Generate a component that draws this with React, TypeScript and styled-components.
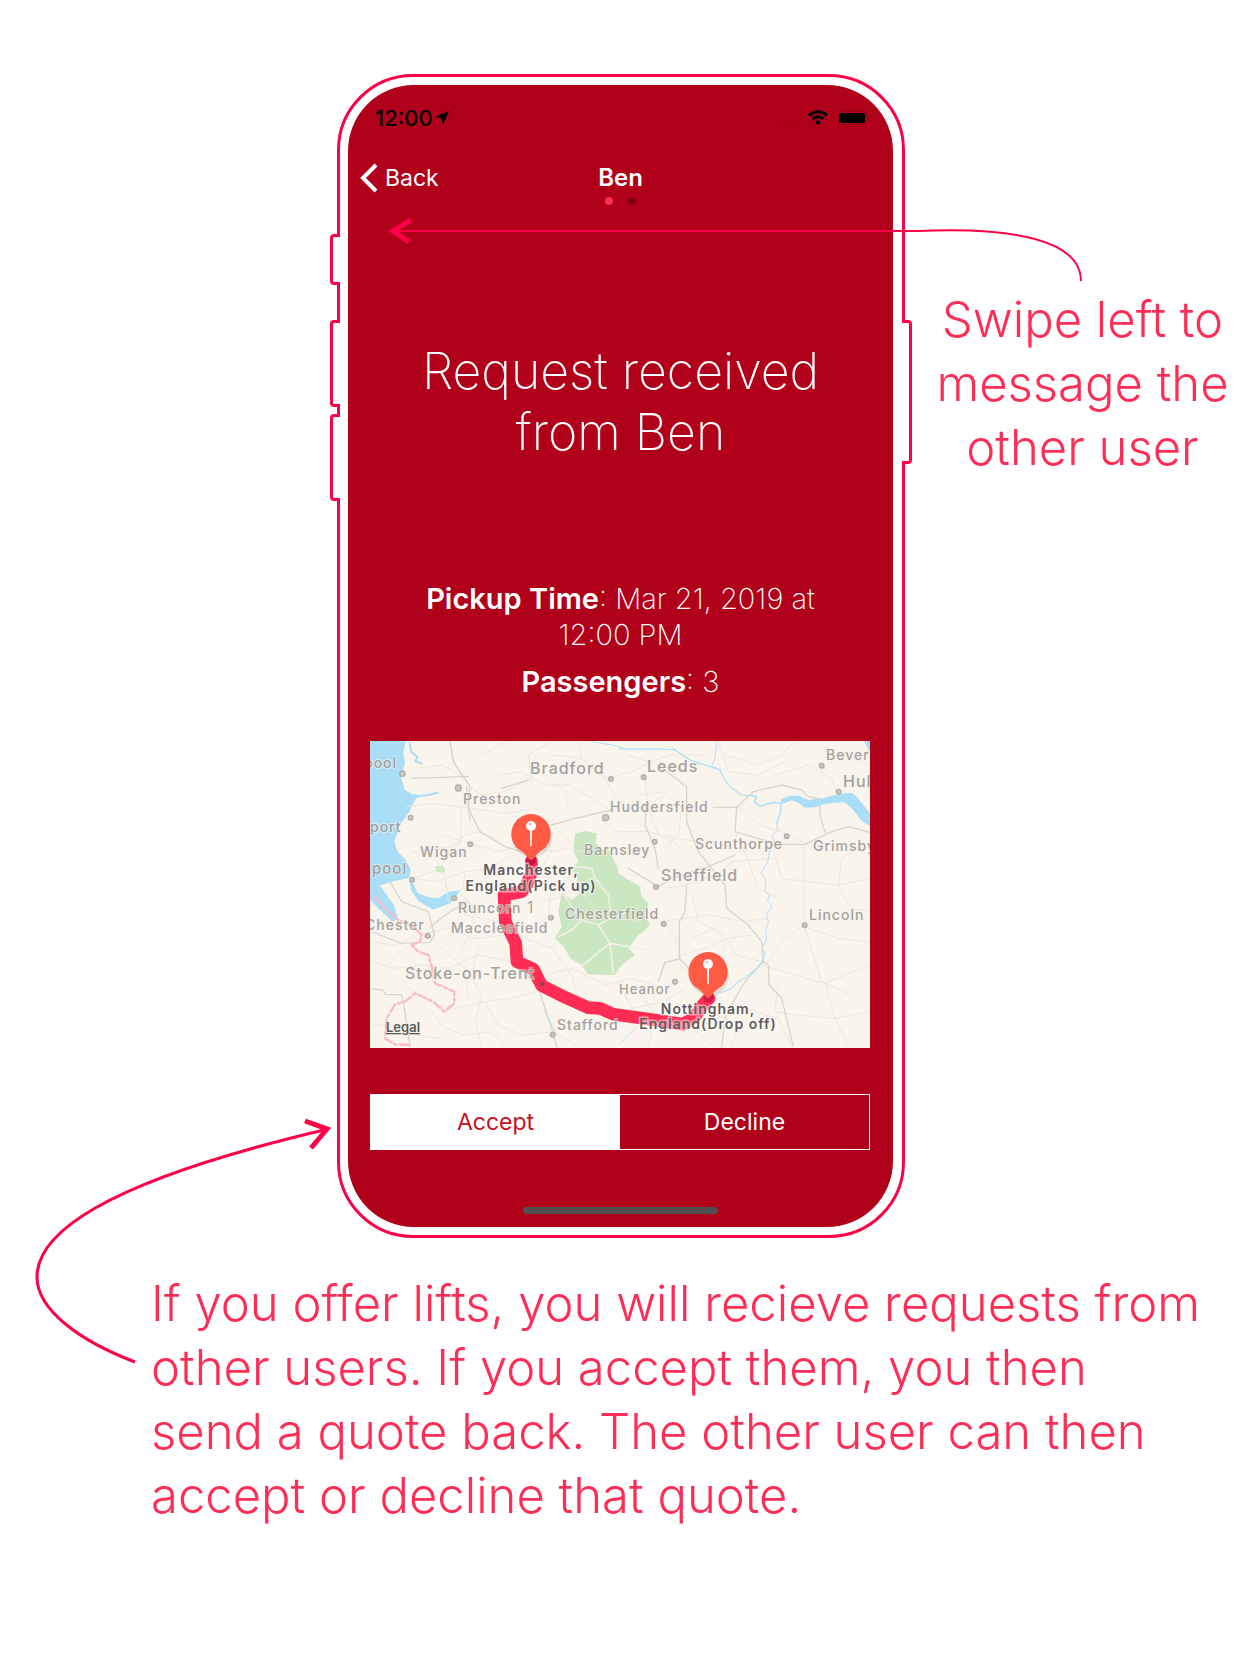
import React, { useState } from "react";
import styled, { createGlobalStyle } from "styled-components";

const pink = "#ff2d55";
const outline = "#ff0048";
const red = "#b10019";

const GlobalStyle = createGlobalStyle`
  *, *::before, *::after { box-sizing: border-box; }
  body {
    margin: 0;
    background: #fff;
    font-family: Inter, "Liberation Sans", Arial, sans-serif;
  }
`;

const Page = styled.main`
  display: flex;
  flex-direction: column;
  padding: 74px 0 120px;
`;

const Showcase = styled.section`
  display: grid;
  grid-template-columns: minmax(0, 1fr) minmax(0, 568px) minmax(0, 1fr);
`;

const Note = styled.p<{ $center?: boolean }>`
  margin: 0;
  color: ${pink};
  font-size: 49px;
  font-weight: 300;
  line-height: 64px;
  text-align: ${(p) => (p.$center ? "center" : "left")};
  white-space: nowrap;
`;

const SideNote = styled.aside`
  grid-column: 3;
  display: flex;
  justify-content: center;
  padding: 214px 0 0 18px;
`;

const Footnote = styled.footer`
  padding: 34px 60px 0 151px;
`;

const Phone = styled.div`
  grid-column: 2;
  position: relative;
  border: 3px solid ${outline};
  border-radius: 76px;
  padding: 8px 9px 8px 8px;
`;

const SideButton = styled.span<{ $side: "left" | "right"; $top: number; $height: number }>`
  position: absolute;
  top: ${(p) => p.$top}px;
  height: ${(p) => p.$height}px;
  width: 10px;
  background: #fff;
  border: 3px solid ${outline};
  ${(p) =>
    p.$side === "left"
      ? "left: -10px; border-right: 0; border-radius: 4px 0 0 4px;"
      : "right: -10px; border-left: 0; border-radius: 0 4px 4px 0;"}
`;

const SwipeArrow = styled.svg`
  position: absolute;
  left: 40px;
  top: 140px;
  z-index: 1;
  pointer-events: none;
`;

const RequestArrow = styled.svg`
  position: absolute;
  right: 568px;
  top: 1033px;
  pointer-events: none;
`;

const Screen = styled.div`
  display: flex;
  flex-direction: column;
  overflow: hidden;
  border-radius: 66px;
  background: ${red};
  color: #fff;
`;

const StatusBar = styled.div`
  display: flex;
  justify-content: space-between;
  align-items: center;
  height: 65px;
  padding: 0 23px 0 27px;
  color: #000;
`;

const StatusGroup = styled.div<{ $gap: number }>`
  display: flex;
  align-items: center;
  gap: ${(p) => p.$gap}px;
  font-size: 22px;
  font-weight: 500;
`;

const NavBar = styled.header`
  display: grid;
  grid-template-columns: 1fr auto 1fr;
  align-items: center;
  height: 56px;
  padding: 0 12px;
`;

const BackButton = styled.button`
  display: flex;
  align-items: center;
  justify-self: start;
  gap: 7px;
  border: 0;
  padding: 0;
  background: none;
  color: #fff;
  font: 400 23px/28px Inter, sans-serif;
`;

const NavTitle = styled.h1`
  margin: 0;
  font-size: 24px;
  font-weight: 600;
  line-height: 28px;
`;

const PageDots = styled.div`
  display: flex;
  justify-content: center;
  gap: 15px;
  height: 8px;
  margin-top: -9px;
`;

const Dot = styled.i<{ $active?: boolean }>`
  width: 8px;
  height: 8px;
  border-radius: 50%;
  background: ${(p) => (p.$active ? pink : "#850013")};
`;

const Title = styled.h2`
  margin: 0;
  padding-top: 136px;
  font-size: 50px;
  font-weight: 200;
  line-height: 61px;
  text-align: center;
`;

const Details = styled.div`
  display: flex;
  flex-direction: column;
  gap: 11px;
  padding-top: 118px;
  font-size: 29px;
  font-weight: 200;
  line-height: 36px;
  text-align: center;
`;

const Detail = styled.p`
  margin: 0;

  strong {
    font-weight: 600;
  }
`;

const MapCard = styled.div`
  margin: 41px 23px 0 22px;
  overflow: hidden;
  background: #f9f5ed;

  svg {
    display: block;
    width: 100%;
  }
`;

const Segments = styled.div`
  display: flex;
  margin: 46px 23px 0 22px;
  border: 1px solid #fff;
`;

const Segment = styled.button<{ $selected: boolean }>`
  flex: 1;
  height: 54px;
  border: 0;
  background: ${(p) => (p.$selected ? "#fff" : red)};
  color: ${(p) => (p.$selected ? "#c4101f" : "#fff")};
  font: 400 23px/28px Inter, sans-serif;
`;

const HomeIndicator = styled.div`
  align-self: center;
  width: 195px;
  height: 7px;
  margin: 57px 0 13px;
  border-radius: 4px;
  background: #505050;
`;

const minorRoads = [
  "M150 100L230 90 300 130",
  "M255 20L270 90 310 150 350 180 420 170 490 135",
  "M125 215L200 205 290 215 420 235 520 220",
  "M290 215L285 330 200 345 140 350",
  "M350 290L300 300 255 345 225 400 150 430",
  "M330 170L420 210 470 260 460 330",
  "M230 300L330 330 400 350 480 330 560 350 610 340",
  "M140 430L220 440 300 410 380 400 450 350",
  "M200 350L240 420 250 500 300 540 400 560",
  "M300 420L290 480 330 520 320 590 290 640",
  "M20 620L90 630 160 600 250 580 330 610 430 600",
  "M20 680L90 700 170 690 250 700 340 660 430 680",
  "M60 700L120 640 190 600 240 650 300 700 310 780",
  "M340 640L320 720 350 790 330 860 350 935",
  "M130 760L210 810 270 820 360 800 440 790 510 770",
  "M360 800L400 870 470 900 560 890 640 935",
  "M200 830L240 880 300 900 380 890 420 935",
  "M20 870L110 870 150 900 230 910",
  "M400 120L470 110 540 150 610 150 680 190 740 230",
  "M350 60L420 20",
  "M500 150L490 60 560 20",
  "M570 140L600 170 610 210 560 260 480 270",
  "M640 20L650 70 720 130 800 110 860 80",
  "M560 60L650 70M720 130L760 200 830 220 900 180",
  "M790 60L850 80 920 60 1010 60",
  "M840 130L850 220 880 300 940 330",
  "M830 180L900 170 950 220 940 300 900 340",
  "M700 250L760 290 850 290 930 310 1010 320",
  "M560 260L600 310 640 350 700 340",
  "M560 400L620 440 670 500 700 540 760 550 830 560",
  "M540 500L600 480 660 440",
  "M450 300L540 290 560 350 530 400",
  "M520 410L560 440 550 540 490 600",
  "M480 610L560 640 620 720 640 800 700 830",
  "M540 720L620 700 720 750 800 730 870 750",
  "M760 740L800 820 900 800 960 760",
  "M900 460L960 450 1060 420 1100 380 1230 370",
  "M880 560L960 550 1040 540 1130 560 1210 550",
  "M900 560L940 620 950 700 1000 740 1080 720",
  "M980 480L1000 560 1080 600 1110 660 1190 680",
  "M950 660L1020 640 1090 610 1160 600",
  "M1080 60L1180 90 1250 60 1290 20",
  "M1060 20L1090 110 1180 120 1260 80",
  "M1230 120L1330 90 1400 130 1420 190",
  "M1370 110L1430 50 1515 90",
  "M1420 60L1380 30",
  "M1110 290L1150 380 1180 460 1240 490",
  "M1120 215L1180 270 1250 290 1330 330",
  "M1220 330L1250 430 1330 440 1420 450 1515 430",
  "M1318 330L1318 560",
  "M1500 320L1430 370 1420 460 1460 520 1515 530",
  "M1318 570L1250 620 1200 690",
  "M1318 575L1370 740 1460 780",
  "M1318 575L1420 610 1515 620",
  "M1190 690L1290 720 1380 745 1515 690",
  "M1240 750L1230 830 1300 840 1410 850 1515 830",
  "M1380 745L1410 850 1450 935",
  "M1100 800L1170 830 1240 850 1280 935",
  "M900 840L980 880 1040 930",
  "M960 690L1010 750 1040 830 1120 870 1100 935",
  "M830 780L870 840 850 935",
  "M980 610L1050 580 1080 620 1060 700",
];

const majorRoads = [
  "M255 20L265 80 315 155 310 220 345 290 420 335 470 350",
  "M140 130L310 124",
  "M410 160L490 135",
  "M740 225L630 250 560 270",
  "M75 440L110 500 190 530 208 600 195 622 110 625 20 590",
  "M195 575L255 530 310 500",
  "M305 155L315 260",
  "M20 762L55 765 60 778 110 780 118 820 135 935",
  "M440 600L470 700 520 760 560 880 575 935",
  "M845 200L840 270 870 340 880 400",
  "M880 90L965 155 965 260 1000 350 1080 450 1085 520 1150 570 1190 620 1195 680",
  "M790 400L880 455 920 430 1030 395 1110 360",
  "M1045 217L1115 217",
  "M1115 217L1165 170 1250 150 1310 165 1330 185 1365 192",
  "M1365 192L1365 240 1380 292",
  "M1115 217L1110 290 1240 328 1320 328 1400 290 1450 275 1515 292",
  "M965 450L960 530 943 560 943 670 990 720",
  "M943 672L900 682 880 740",
  "M1195 680L1140 740 1110 790 1080 850 1070 935",
  "M1195 680L1210 690 1212 750 1250 790 1285 935",
];

const towns: [number, number, number][] = [
  [112, 116, 8], [280, 159, 9], [137, 248, 7], [316, 328, 7], [141, 434, 7],
  [268, 490, 7], [188, 602, 7], [738, 132, 7], [722, 248, 9], [558, 548, 7],
  [563, 899, 7], [836, 127, 7], [869, 320, 7], [873, 456, 7], [896, 567, 7],
  [930, 740, 7], [1265, 304, 7], [1319, 571, 7], [1370, 92, 7], [1421, 170, 7],
];

type LabelData = { x: number; y: number; size: number; text: string };

const placeLabels: LabelData[] = [
  { x: -6, y: 27, size: 14, text: "pool" },
  { x: 0, y: 91, size: 14, text: "port" },
  { x: 2, y: 133, size: 15, text: "pool" },
  { x: -5, y: 189, size: 14, text: "Chester" },
  { x: 160, y: 33, size: 16, text: "Bradford" },
  { x: 277, y: 31, size: 16, text: "Leeds" },
  { x: 93, y: 63, size: 14, text: "Preston" },
  { x: 240, y: 71, size: 14, text: "Huddersfield" },
  { x: 50, y: 116, size: 14, text: "Wigan" },
  { x: 214, y: 114, size: 14, text: "Barnsley" },
  { x: 325, y: 108, size: 14, text: "Scunthorpe" },
  { x: 443, y: 110, size: 14, text: "Grimsby" },
  { x: 456, y: 19, size: 14, text: "Beverley" },
  { x: 473, y: 46, size: 16, text: "Hull" },
  { x: 291, y: 140, size: 16, text: "Sheffield" },
  { x: 88, y: 172, size: 14, text: "Runcorn" },
  { x: 81, y: 192, size: 14, text: "Macclesfield" },
  { x: 195, y: 178, size: 14, text: "Chesterfield" },
  { x: 439, y: 179, size: 14, text: "Lincoln" },
  { x: 35, y: 238, size: 16, text: "Stoke-on-Trent" },
  { x: 249, y: 253, size: 13, text: "Heanor" },
  { x: 187, y: 289, size: 14, text: "Stafford" },
];

const PlaceLabel = styled.text<{ $size: number }>`
  font-size: ${(p) => p.$size}px;
  font-weight: 500;
  letter-spacing: 1px;
  fill: #a3a19e;
  stroke: #f9f5ed;
  stroke-opacity: 0.55;
  stroke-width: 2px;
  paint-order: stroke;
`;

const PinLabel = styled.text`
  font-size: 14px;
  font-weight: 600;
  letter-spacing: 1px;
  text-anchor: middle;
  fill: #5f5c5b;
  stroke: #fff;
  stroke-opacity: 0.5;
  stroke-width: 3px;
  paint-order: stroke;
`;

const LegalLink = styled.text`
  font-size: 13px;
  font-weight: 600;
  fill: #5a5a5a;
  text-decoration: underline;
`;

const RouteMark = styled.text`
  font-size: 16px;
  font-weight: 300;
  fill: #8d8b88;
`;

function Pin({ x, y }: { x: number; y: number }) {
  return (
    <g transform={`translate(${x} ${y})`}>
      <ellipse cx="1" cy="3" rx="20" ry="20" fill="#000" opacity="0.1" />
      <path d="M0-20A20 20 0 0 1 14 14Q6 19 3 24Q0 28-3 24Q-6 19-14 14A20 20 0 0 1 0-20Z" fill="#ff5a43" />
      <path d="M-1-4h2l-.3 16h-1.4z" fill="#fff" />
      <circle cy="-8" r="5" fill="#fff" />
      <circle cx="-1" cy="-10" r="1" fill="#ff8a78" />
    </g>
  );
}

function RouteMap() {
  return (
    <svg viewBox="0 0 500 307" role="img" aria-label="Route from Manchester to Nottingham">
      <g transform="scale(.33333) translate(-15 -18)" fill="none" strokeLinejoin="round" strokeLinecap="round">
        <path fill="#a9def6" d="M15 18H122L115 55 120 85 108 130 120 165 142 178 165 180 150 195 130 235 105 270 88 320 98 350 122 375 138 405 132 428 80 440 44 452 62 475 88 512 98 548 85 560 50 530 15 495Z" />
        <path fill="#a9def6" d="M134 440L143 442 158 475 190 487 220 490 250 470 287 466 272 485 255 505 205 524 160 498 138 465Z" />
        <path stroke="#a9def6" strokeWidth="6" d="M134 24L138 50 157 65 151 78 170 86M150 185L190 180 218 173" />
        <path fill="#cbe7c2" d="M630 295L665 288 695 295 692 325 715 345 735 348 750 385 770 405 800 440 825 455 830 485 850 505 838 540 855 570 835 590 820 600 790 640 810 660 770 690 750 720 670 718 650 690 615 670 600 640 570 610 590 575 580 530 590 475 620 495 640 480 635 430 620 400 640 380 625 345Z" />
        <path fill="#f9f5ed" d="M755 385L785 375 820 400 825 425 790 435 760 415Z" />
        <path fill="#cbe7c2" d="M210 395L232 390 242 405 236 414 213 410Z" />
        <g stroke="#ebe6de" strokeWidth="3">
          {minorRoads.map((d) => <path key={d} d={d} />)}
        </g>
        <g stroke="#d9d5cd" strokeWidth="4">
          {majorRoads.map((d) => <path key={d} d={d} />)}
        </g>
        <path stroke="#f3efe4" strokeWidth="5" d="M600 485L650 555 620 585 580 605M650 555L700 570 735 625 850 645M735 625L745 715M735 625L690 660 655 690M700 570L740 550 790 530M740 550L730 480 690 430 680 400 630 395" />
        <g stroke="#b5e1f2">
          <path strokeWidth="4" strokeDasharray="8 4" d="M765 42H890L930 45 975 75 1020 90 1065 105 1080 135 1100 160 1130 180 1160 182" />
          <path strokeWidth="3" d="M920 35L960 68 1000 85 1045 98M1055 20L1050 70 1040 95 1070 105M680 20L740 30 775 38" />
          <path strokeWidth="5" d="M1160 182L1175 185 1168 200 1185 214 1225 202 1248 205 1246 235 1235 265" />
          <path strokeWidth="3" d="M1235 265L1238 285 1222 300 1228 325 1214 345 1208 380 1188 415 1203 435 1200 465 1212 480 1208 500 1222 515 1204 535 1210 560 1202 590 1206 610 1192 640 1200 655 1192 680" />
          <path strokeWidth="4" strokeDasharray="10 4" d="M1192 680L1170 705 1145 725 1120 740 1100 760 1060 775 1040 790" />
          <path strokeWidth="3" d="M765 925L800 890 815 875M540 830L575 900" />
        </g>
        <path fill="#a9def6" d="M1246 194L1275 182 1302 182 1330 195 1375 190 1400 182 1430 176 1460 173 1475 185 1515 235V273L1490 258 1465 225 1440 202 1410 203 1380 207 1350 217 1320 218 1298 202 1280 196 1250 207Z" />
        <path fill="#a9def6" d="M1498 18H1515V55Z" />
        <path stroke="#ffb9c1" strokeWidth="7" strokeDasharray="26 9 9 9" d="M30 488L65 525 95 552 145 575 170 600 165 620 140 630 160 650 190 660 200 695 210 745 268 770 268 805 238 830 205 800 150 775 120 800 90 808 65 850 60 910 90 928 140 930" />
        <path stroke={pink} strokeWidth="38" d="M499 378L500 410 485 450 470 470 417 480 421 560 452 625 456 680 505 702 530 752 590 782 670 818 705 820 745 838 800 845 870 855 955 868 990 845 1005 820 1032 790" />
        <circle cx="499" cy="376" r="15" fill="#c71544" />
        <circle cx="1030" cy="788" r="15" fill="#d3194a" />
        {towns.map(([cx, cy, r]) => (
          <circle key={`${cx}-${cy}`} cx={cx} cy={cy} r={r} fill="#c9c7c3" stroke="#b0aeaa" strokeWidth="4" />
        ))}
        <circle cx="531" cy="747" r="7" fill="#96404f" />
      </g>
      {placeLabels.map((l) => (
        <PlaceLabel key={l.text + l.y} x={l.x} y={l.y} $size={l.size}>{l.text}</PlaceLabel>
      ))}
      <RouteMark x="157" y="172">1</RouteMark>
      <PinLabel x="161" y="134">Manchester,</PinLabel>
      <PinLabel x="161" y="150">England(Pick up)</PinLabel>
      <PinLabel x="338" y="273">Nottingham,</PinLabel>
      <PinLabel x="338" y="288">England(Drop off)</PinLabel>
      <Pin x={161} y={93} />
      <Pin x={338} y={231} />
      <LegalLink x="16" y="291">Legal</LegalLink>
    </svg>
  );
}

export default function App() {
  const [answer, setAnswer] = useState("Accept");

  return (
    <>
      <GlobalStyle />
      <Page>
        <Showcase>
          <Phone>
            <SideButton $side="left" $top={157} $height={51} />
            <SideButton $side="left" $top={243} $height={87} />
            <SideButton $side="left" $top={337} $height={87} />
            <SideButton $side="right" $top={243} $height={144} />
            <Screen>
              <StatusBar>
                <StatusGroup $gap={2}>
                  12:00
                  <svg width="14" height="14" viewBox="0 0 14 14" aria-hidden="true">
                    <path d="M14 0L8 14 6.5 7.5 0 6Z" />
                  </svg>
                </StatusGroup>
                <StatusGroup $gap={9}>
                  <svg width="24" height="14" viewBox="0 0 24 14" fill="#8c0014" aria-hidden="true">
                    <circle cx="2" cy="12" r="1" /><circle cx="9" cy="12" r="1" />
                    <circle cx="15" cy="12" r="1" /><circle cx="22" cy="12" r="1" />
                  </svg>
                  <svg width="20" height="15" viewBox="0 0 20 15" fill="none" stroke="#000" strokeWidth="3" aria-hidden="true">
                    <path d="M1 5.5Q10-2 19 5.5M4.500 9Q10 4.500 15.500 9" />
                    <circle cx="10" cy="12.500" r="2.200" fill="#000" stroke="none" />
                  </svg>
                  <svg width="33" height="14" viewBox="0 0 33 14" aria-hidden="true">
                    <rect x=".5" y=".5" width="29" height="13" rx="3" fill="none" stroke="#9c0016" />
                    <rect x="2" y="2" width="26" height="10" rx="2" />
                    <path d="M31 5q2 2 0 4z" fill="#8c0014" />
                  </svg>
                </StatusGroup>
              </StatusBar>
              <NavBar>
                <BackButton type="button">
                  <svg width="18" height="30" viewBox="0 0 18 30" fill="none" stroke="#fff" strokeWidth="4" aria-hidden="true">
                    <path d="M16 2L3 15 16 28" />
                  </svg>
                  Back
                </BackButton>
                <NavTitle>Ben</NavTitle>
              </NavBar>
              <PageDots>
                <Dot $active />
                <Dot />
              </PageDots>
              <Title>
                Request received
                <br />
                from Ben
              </Title>
              <Details>
                <Detail>
                  <strong>Pickup Time</strong>: Mar 21, 2019 at
                  <br />
                  12:00 PM
                </Detail>
                <Detail>
                  <strong>Passengers</strong>: 3
                </Detail>
              </Details>
              <MapCard>
                <RouteMap />
              </MapCard>
              <Segments>
                {["Accept", "Decline"].map((name) => (
                  <Segment
                    key={name}
                    type="button"
                    $selected={answer === name}
                    aria-pressed={answer === name}
                    onClick={() => setAnswer(name)}
                  >
                    {name}
                  </Segment>
                ))}
              </Segments>
              <HomeIndicator />
            </Screen>
            <SwipeArrow width="720" height="74" viewBox="0 0 720 74" fill="none" stroke={outline} aria-hidden="true">
              <path strokeWidth="2" d="M14 14H538C630 10 701 22 701 64" />
              <path strokeWidth="5" d="M31 3L13 14 29 25" />
            </SwipeArrow>
            <RequestArrow width="300" height="260" viewBox="0 0 300 260" fill="none" stroke={outline} aria-hidden="true">
              <path strokeWidth="3" d="M101 252C46 231 3 200 3 167C3 113 104 64 290 20" />
              <path strokeWidth="5" d="M271 11L293 19 277 38" />
            </RequestArrow>
          </Phone>
          <SideNote>
            <Note $center>
              Swipe left to
              <br />
              message the
              <br />
              other user
            </Note>
          </SideNote>
        </Showcase>
        <Footnote>
          <Note>
            If you offer lifts, you will recieve requests from
            <br />
            other users. If you accept them, you then
            <br />
            send a quote back. The other user can then
            <br />
            accept or decline that quote.
          </Note>
        </Footnote>
      </Page>
    </>
  );
}
